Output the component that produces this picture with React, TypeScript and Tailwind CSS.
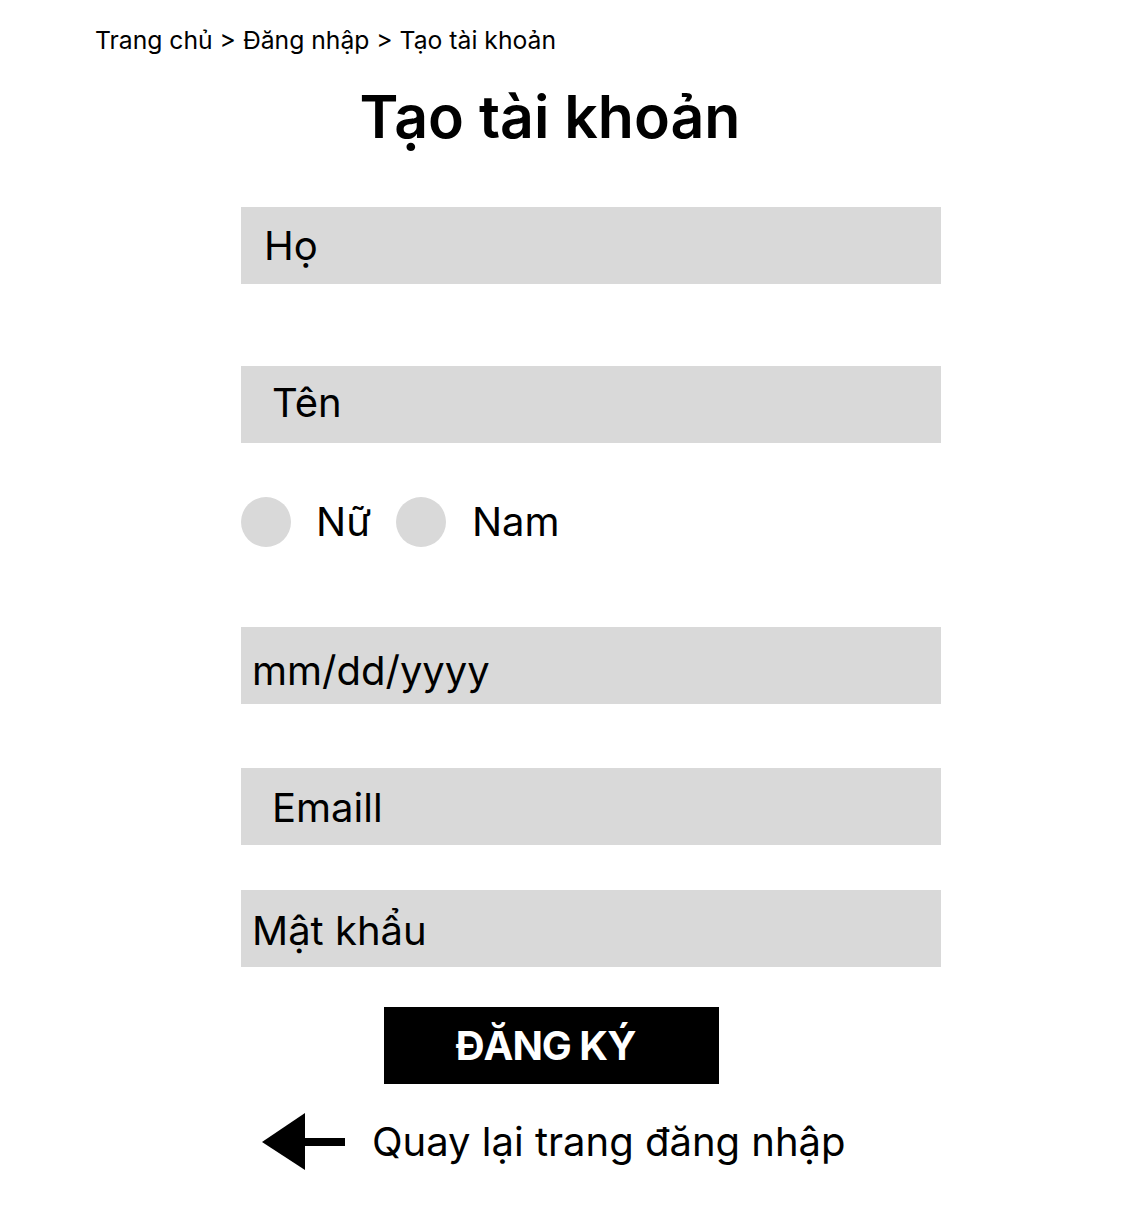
export default function App() {
  const field =
    'block w-[700px] h-[77px] bg-[#d9d9d9] text-[40px] text-black placeholder:text-black outline-none'

  return (
    <div className="min-h-[1219px] bg-white font-['Inter','Noto_Sans',sans-serif] text-black">
      <nav className="pl-[95px] pt-[26px] text-[24.7px] leading-[28px]">
        Trang chủ &gt; Đăng nhập &gt; Tạo tài khoản
      </nav>

      <h1 className="w-[1100px] mt-[27px] text-center text-[59px] leading-[72px] font-semibold">
        Tạo tài khoản
      </h1>

      <form className="ml-[241px] mt-[54px] flex flex-col" onSubmit={(e) => e.preventDefault()}>
        <input className={`${field} pl-[23px]`} placeholder="Họ" />
        <input className={`${field} pl-[31px] pb-[4px] mt-[82px]`} placeholder="Tên" />

        <div className="mt-[54px] flex items-center h-[50px] text-[40px]">
          <span className="w-[50px] h-[50px] rounded-full bg-[#d9d9d9]" />
          <span className="ml-[25px]">Nữ</span>
          <span className="ml-[25px] w-[50px] h-[50px] rounded-full bg-[#d9d9d9]" />
          <span className="ml-[26px]">Nam</span>
        </div>

        <input className={`${field} pl-[11px] pt-[10px] mt-[80px]`} placeholder="mm/dd/yyyy" />
        <input className={`${field} pl-[31px] pt-[2px] mt-[64px]`} placeholder="Emaill" />
        <input className={`${field} pl-[11px] pt-[4px] mt-[45px]`} placeholder="Mật khẩu" />

        <button
          type="submit"
          className="ml-[143px] mt-[40px] w-[335px] h-[77px] bg-black text-white text-[40px] font-bold tracking-[-1px] flex items-center justify-center pr-[12px]"
        >
          ĐĂNG KÝ
        </button>

        <a href="#" className="ml-[21px] mt-[29px] flex items-center h-[57px]">
          <svg width="83" height="57" viewBox="0 0 83 57">
            <polygon points="0,29 43,0 43,57" fill="black" />
            <rect x="42" y="25" width="41" height="8" fill="black" />
          </svg>
          <span className="ml-[27px] text-[40px] leading-[48px]">Quay lại trang đăng nhập</span>
        </a>
      </form>
    </div>
  )
}
